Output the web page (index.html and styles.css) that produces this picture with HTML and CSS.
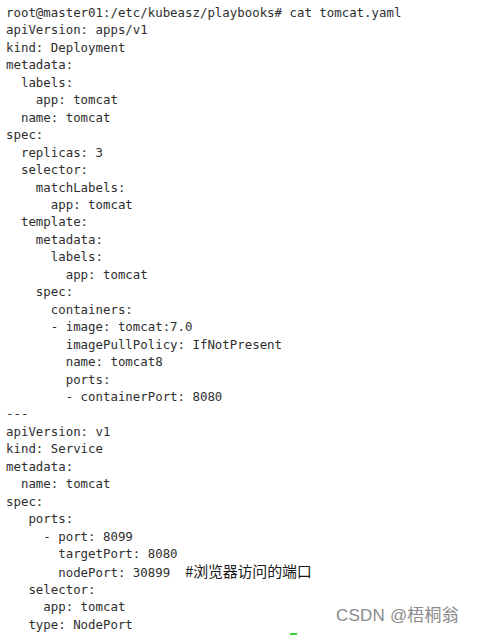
FILE: index.html
```html
<!DOCTYPE html>
<html>
<head>
<meta charset="utf-8">
<link rel="stylesheet" href="styles.css">
</head>
<body>
<div class="shot">
<pre class="term">root@master01:/etc/kubeasz/playbooks# cat tomcat.yaml
apiVersion: apps/v1
kind: Deployment
metadata:
  labels:
    app: tomcat
  name: tomcat
spec:
  replicas: 3
  selector:
    matchLabels:
      app: tomcat
  template:
    metadata:
      labels:
        app: tomcat
    spec:
      containers:
      - image: tomcat:7.0
        imagePullPolicy: IfNotPresent
        name: tomcat8
        ports:
        - containerPort: 8080
---
apiVersion: v1
kind: Service
metadata:
  name: tomcat
spec:
   ports:
     - port: 8099
       targetPort: 8080
       nodePort: 30899  <span class="cmt">#浏览器访问的端口</span>
   selector:
     app: tomcat
   type: NodePort</pre>
<div class="mark">CSDN @梧桐翁</div>
<div class="green"></div>
</div>
</body>
</html>
```
FILE: styles.css
```css
html, body {
  margin: 0;
  padding: 0;
  background: #ffffff;
}
.shot {
  position: relative;
  width: 478px;
  height: 635px;
  overflow: hidden;
  background: #ffffff;
}
.term {
  margin: 0;
  padding: 4px 0 0 6px;
  font-family: "DejaVu Sans Mono", "Liberation Mono", monospace;
  font-size: 12.4px;
  line-height: 17.46px;
  color: #2e2e2e;
  white-space: pre;
}
.cmt {
  font-family: "Noto Sans CJK SC", sans-serif;
  font-size: 15px;
  line-height: 1;
  letter-spacing: -0.2px;
  color: #1a1a1a;
}
.mark {
  position: absolute;
  left: 336px;
  top: 605px;
  font-family: "Liberation Sans", "Noto Sans CJK SC", sans-serif;
  font-size: 17px;
  line-height: 22px;
  color: #8a8a8a;
  letter-spacing: 0.2px;
}
.green {
  position: absolute;
  left: 290px;
  top: 633px;
  width: 7px;
  height: 2px;
  background: #38d038;
}
```
